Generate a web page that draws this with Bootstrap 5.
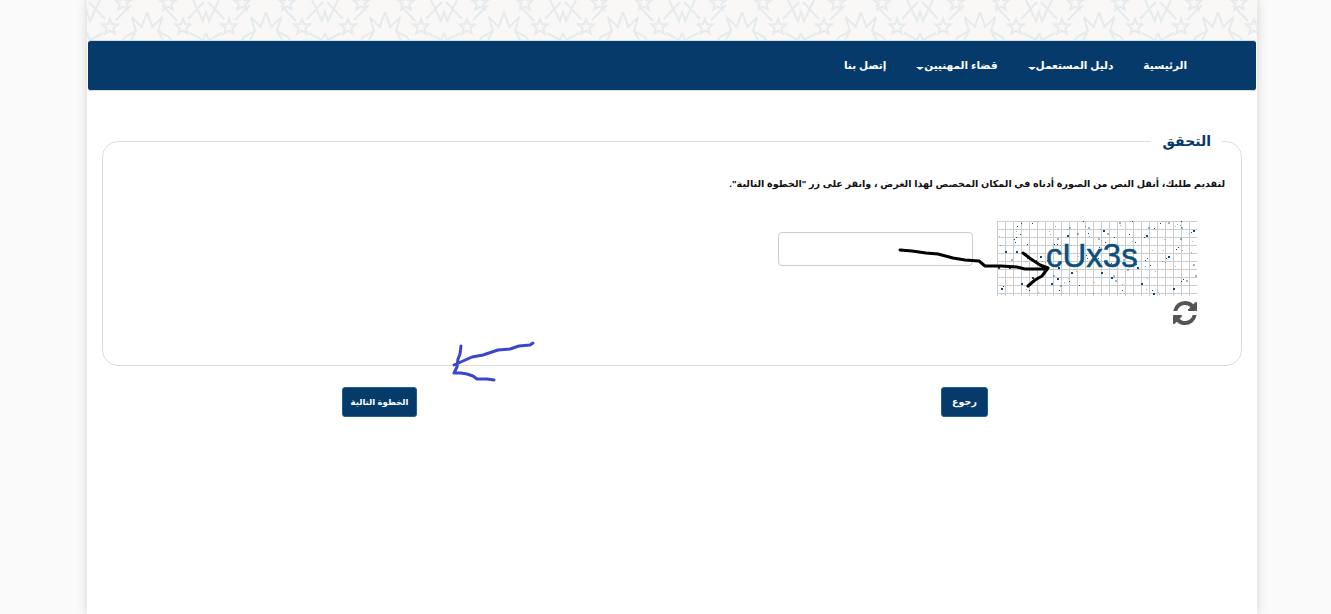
<!DOCTYPE html>
<html lang="ar" dir="rtl">
<head>
<meta charset="utf-8">
<title>التحقق</title>
<link href="https://cdn.jsdelivr.net/npm/bootstrap@5.3.0/dist/css/bootstrap.min.css" rel="stylesheet">
<style>
html,body{height:100%;overflow:hidden}
body{background:#fafafa;font-family:"Liberation Sans","DejaVu Sans",sans-serif;font-size:11px;color:#222}
.shell{width:1170px;height:614px;margin:0 74px 0 auto;background:#fff;box-shadow:0 0 10px rgba(0,0,0,.16);position:relative}
.pat{height:40px;display:block;width:100%;background:#f9f8f6}
.topbar{background:#053a6b;height:51px;margin:0 1px;border-radius:3px;border:1px solid #d5dbe0;border-width:1px 0;padding:0 54px 0 0}
.topbar a{color:#fff;font-weight:700;font-size:10.5px;text-decoration:none;white-space:nowrap;padding:0 15px}
.caret{display:inline-block;border-top:3px solid #fff;border-left:4px solid transparent;border-right:4px solid transparent;vertical-align:-1px}
.frame{margin:50px 15px 0 15px;height:225px;border:1px solid #ddd;border-radius:16px;padding:0 16px;position:relative}
.frame-title{position:absolute;top:-12px;right:19px;background:#fff;padding:0 11px;margin:0;font-size:14px;font-weight:700;color:#053a6b;line-height:22px}
.frame-note{margin:32px 0 0;font-weight:700;font-size:9.6px;line-height:20px;color:#111}
.capt-row{margin-top:27px}
.capt-box{width:200px;margin-right:28px}
.capt-field{width:195px;height:34px;border:1px solid #ccc;border-radius:4px;margin:11px 24px 0 0;box-shadow:none}
.capt-img{display:block}
.spin{display:block;margin:3px -2px 0 auto}
.ink{position:absolute;pointer-events:none;left:0;top:0}
.go{background:#053a6b;border:1px solid #1d5f99;color:#fff;font-weight:700;font-size:9.5px;border-radius:3px;height:30px;padding:0 10px;line-height:26px}
.go-long{font-size:8.5px;padding:0 8px}
.go:hover{background:#053a6b;color:#fff}
.btnrow{margin:21px 0 0}
</style>
</head>
<body>
<div class="shell">
<svg class="pat" aria-hidden="true">
<defs>
<path id="tinystar" d="M0-8 2-2.8 7.6-2.5 3.3 1.1 4.7 6.5 0 3.5-4.7 6.5-3.3 1.1-7.600-2.500-2-2.800Z"/>
<pattern id="geo" width="119" height="40" patternUnits="userSpaceOnUse">
<g fill="none" stroke="#e8ebed" stroke-width="2.2">
<use href="#tinystar" x="23" y="27"/>
<use href="#tinystar" x="96" y="27"/>
<use href="#tinystar" x="36" y="3"/>
<use href="#tinystar" x="81" y="3"/>
<path d="M60 12 54.700 27 44.700 17 49 31 38 37 35 42M60 12 65.300 27 75.300 17 71 31 82 37 85 42M49 31 44 40M71 31 76 40"/>
<path d="M44 5 29 20M75 5 90 21M18 19 2 2M101 19 117 2M16 33 3 40M103 33 116 40"/>
<path d="M106 0 116 21 119 12 122 21 132 0M-13 0-3 21 0 12 3 21 13 0M119 33 116 40M119 33 122 40M0 33-3 40M0 33 3 40"/>
</g></pattern></defs>
<rect width="100%" height="100%" fill="url(#geo)"/>
</svg>
<nav class="topbar d-flex align-items-center">
<a href="#">الرئيسية</a>
<a href="#">دليل المستعمل<span class="caret"></span></a>
<a href="#">قضاء المهنيين<span class="caret"></span></a>
<a href="#">إتصل بنا</a>
</nav>
<section class="frame">
<h2 class="frame-title">التحقق</h2>
<p class="frame-note">لتقديم طلبك، أنقل النص من الصورة أدناه في المكان المخصص لهذا الغرض ، وانقر على زر "الخطوة التالية".</p>
<div class="capt-row d-flex align-items-start">
<div class="capt-box">
<svg class="capt-img" dir="ltr" width="200" height="75" viewBox="0 0 200 75">
<rect width="200" height="75" fill="#fff"/>
<g stroke="#ccc" stroke-width="1" id="gridlines"></g>
<g id="specks" fill="#0b4a7a"></g>
<text x="49" y="46" fill="#0b4f7d" stroke="#0b4f7d" stroke-width=".5" font-family="Liberation Sans" font-size="33" direction="ltr">cUx3s</text>
</svg>
<svg class="spin" width="28" height="28" viewBox="0 0 1792 1792"><path fill="#555" d="M1639 1056q0 5-1 7-64 268-268 434.500t-478 166.500q-146 0-282.500-55t-243.500-157l-129 129q-19 19-45 19t-45-19-19-45v-448q0-26 19-45t45-19h448q26 0 45 19t19 45-19 45l-137 137q71 66 161 102t187 36q134 0 250-65t186-179q11-17 53-117 8-23 30-23h192q13 0 22.500 9.500t9.500 22.500zm25-800v448q0 26-19 45t-45 19h-448q-26 0-45-19t-19-45 19-45l138-138q-148-137-349-137-134 0-250 65t-186 179q-11 17-53 117-8 23-30 23h-199q-13 0-22.500-9.500t-9.500-22.500v-7q65-268 270-434.500t480-166.500q146 0 284 55.500t245 156.500l130-129q19-19 45-19t45 19 19 45z"/></svg>
</div>
<input type="text" class="form-control capt-field" aria-label="capt">
</div>
</section>
<div class="row btnrow g-0">
<div class="col-6 text-center"><button class="btn go">رجوع</button></div>
<div class="col-6 text-center"><button class="btn go go-long">الخطوة التالية</button></div>
</div>
<svg class="ink" width="1170" height="614" viewBox="87 0 1170 614" fill="none" stroke-linecap="round" stroke-linejoin="round">
<path stroke="#000" stroke-width="3" d="M900 250l12 1 14 2 12 1 15 4 12 2 14 1 6 5 16 0 16 1 8 2 22 0M1023 253l8 6 9 6 8 3-6 8-7 4-7 6"/>
<path stroke="#3c46c8" stroke-width="3" d="M533 343l-3 2-11 1-9 3-12 1-15 5-11 2-18 8M461 346l-1 8-2 5-1 8-3 6 7 0 6 1 6 2 4 3 10 0 7 1"/>
</svg>
</div>
<script>
var g=document.getElementById('gridlines'),s=document.getElementById('specks'),h='';
for(var x=0;x<200;x+=8)h+='<line x1="'+x+'.5" y1="0" x2="'+x+'.5" y2="75"/>';
for(var y=0;y<75;y+=8)h+='<line x1="0" y1="'+y+'.5" x2="200" y2="'+y+'.5"/>';
g.innerHTML=h;
var r=7,d='';
for(var i=0;i<150;i++){r=(r*137+91)%1009;var a=r%199;r=(r*137+91)%1009;var b=r%74;r=(r*137+91)%1009;var z=r%3==0?2:1;d+='<rect x="'+a+'" y="'+b+'" width="'+z+'" height="'+z+'" opacity="'+(r%2?1:.4)+'"/>';}
s.innerHTML=d;
</script>
</body>
</html>
